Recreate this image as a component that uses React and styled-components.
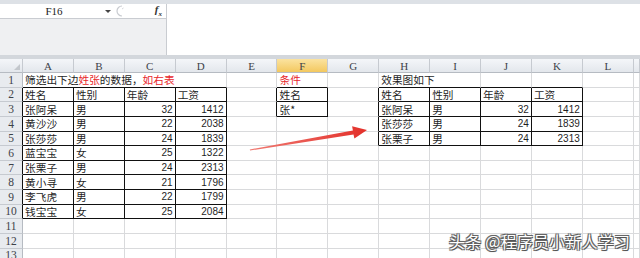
import React from "react";
import styled, { createGlobalStyle } from "styled-components";

const COLW = 50.9;
const ROWH = 14.64;
const GRID = "#d9dadc";
const INK = "#111";
const CJK = `"Noto Sans CJK SC", "Noto Sans", sans-serif`;

const GlobalStyle = createGlobalStyle`
  html, body { margin: 0; padding: 0; background: #fff; overflow: hidden; }
`;

const Window = styled.div`
  position: relative;
  width: 640px;
  height: 258px;
  overflow: hidden;
  font-family: ${CJK};
  background: #fff;
`;

const FormulaArea = styled.div`
  height: 59px;
  box-sizing: border-box;
  border-top: 4px solid #dde1e6;
  border-bottom: 4px solid #d3d7dc;
  display: grid;
  grid-template-columns: 167px 1fr;
`;

const LeftPanel = styled.div`
  display: flex;
  flex-direction: column;
  background: #eff0f2;
  border-right: 1px solid #c9ccd1;
`;

const NameRow = styled.div`
  height: 14px;
  display: flex;
  align-items: center;
  background: #fff;
  border-bottom: 1px solid #c9ccd1;
`;

const NameBox = styled.div`
  width: 100px;
  text-align: center;
  font-family: "Liberation Serif", serif;
  font-size: 11px;
  color: #222;
  padding-left: 4px;
`;

const DropArrow = styled.span`
  width: 0;
  height: 0;
  border-left: 3px solid transparent;
  border-right: 3px solid transparent;
  border-top: 3px solid #444;
  margin-left: 1px;
`;

const Buttons = styled.div`
  flex: 1;
  display: flex;
  align-items: center;
  justify-content: space-between;
  padding: 0 4px 0 5px;
`;

const Fx = styled.i`
  font-family: "Liberation Serif", serif;
  font-size: 11px;
  font-weight: bold;
  color: #333;
  & sub {
    font-size: 7px;
  }
`;

const FormulaInput = styled.div`
  background: #fff;
`;

const Sheet = styled.div`
  display: grid;
  grid-template-columns: 23px repeat(12, ${COLW}px) 1fr;
  grid-template-rows: 14px;
  grid-auto-rows: ${ROWH}px;
`;

const ColHead = styled.div`
  box-sizing: border-box;
  display: flex;
  align-items: center;
  justify-content: center;
  font-family: "Liberation Serif", serif;
  font-size: 11px;
  color: #3d4248;
  border-right: 1px solid #c6cad0;
  border-bottom: 1px solid #b6bbc2;
  background: ${(p) =>
    p.$active
      ? "linear-gradient(#fbe3a0, #f3c85f)"
      : "linear-gradient(#f4f6f9, #e3e7ec)"};
`;

const Corner = styled(ColHead)`
  position: relative;
  &::after {
    content: "";
    position: absolute;
    right: 2px;
    bottom: 2px;
    border-left: 6px solid transparent;
    border-bottom: 6px solid #c3c7cc;
  }
`;

const RowHead = styled.div`
  box-sizing: border-box;
  display: flex;
  align-items: center;
  justify-content: center;
  font-family: "Liberation Serif", serif;
  font-size: 11.5px;
  color: #3d4248;
  background: #e8ebef;
  border-bottom: 1px solid #c6cad0;
  border-right: 1px solid ${(p) => (p.$box ? INK : "#b6bbc2")};
`;

const Cell = styled.div`
  box-sizing: border-box;
  grid-column: span ${(p) => p.$span || 1};
  display: flex;
  align-items: center;
  justify-content: ${(p) => (p.$num ? "flex-end" : "flex-start")};
  padding: 0 2px 0 2px;
  white-space: nowrap;
  overflow: visible;
  font-family: ${(p) => (p.$num ? `"Liberation Sans", sans-serif` : CJK)};
  font-size: ${(p) => (p.$num ? "10px" : "10.7px")};
  color: ${(p) => (p.$red ? "#e8262b" : "#1f1f1f")};
  border-right: 1px solid ${(p) => p.$right};
  border-bottom: 1px solid ${(p) => p.$bottom};
`;

const Red = styled.span`
  color: #e8262b;
`;

const Overlay = styled.svg`
  position: absolute;
  left: 0;
  top: 0;
  pointer-events: none;
`;

const Watermark = styled.div`
  position: absolute;
  left: 449px;
  top: 229px;
  font-family: ${CJK};
  font-size: 16px;
  color: #fff;
  letter-spacing: 0.2px;
  text-shadow: 1px 1px 0 #555, -1px -1px 0 #666, 1px -1px 0 #666, -1px 1px 0 #666,
    0 0 2px #333;
`;

const COLS = ["A", "B", "C", "D", "E", "F", "G", "H", "I", "J", "K", "L"];

const boxes = [
  { r1: 2, r2: 10, c1: 0, c2: 3 },
  { r1: 2, r2: 3, c1: 5, c2: 5 },
  { r1: 2, r2: 5, c1: 7, c2: 10 },
];

const inBox = (r, c) =>
  boxes.some((b) => r >= b.r1 && r <= b.r2 && c >= b.c1 && c <= b.c2);

const people = [
  ["张阿呆", "男", 32, 1412],
  ["黄沙沙", "男", 22, 2038],
  ["张莎莎", "男", 24, 1839],
  ["蓝宝宝", "女", 25, 1322],
  ["张栗子", "男", 24, 2313],
  ["黄小寻", "女", 21, 1796],
  ["李飞虎", "男", 22, 1799],
  ["钱宝宝", "女", 25, 2084],
];
const result = people.filter((p) => p[0].startsWith("张"));
const header = ["姓名", "性别", "年龄", "工资"];

function buildRows() {
  const rows = {};
  for (let r = 1; r <= 13; r++) rows[r] = {};
  rows[1][0] = {
    span: 4,
    text: (
      <>
        筛选出下边<Red>姓张</Red>的数据，<Red>如右表</Red>
      </>
    ),
  };
  rows[1][5] = { text: "条件", red: true };
  rows[1][7] = { span: 2, text: "效果图如下" };
  header.forEach((h, i) => {
    rows[2][i] = { text: h };
    rows[2][7 + i] = { text: h };
  });
  rows[2][5] = { text: "姓名" };
  rows[3][5] = { text: "张*" };
  people.forEach((p, i) =>
    p.forEach((v, j) => (rows[3 + i][j] = { text: v, num: typeof v === "number" }))
  );
  result.forEach((p, i) =>
    p.forEach((v, j) => (rows[3 + i][7 + j] = { text: v, num: typeof v === "number" }))
  );
  return rows;
}

const rows = buildRows();

function SheetGrid() {
  const out = [];
  out.push(<Corner key="corner" />);
  COLS.forEach((c) =>
    out.push(
      <ColHead key={c} $active={c === "F"}>
        {c}
      </ColHead>
    )
  );
  out.push(<ColHead key="M" />);

  for (let r = 1; r <= 13; r++) {
    out.push(
      <RowHead key={`h${r}`} $box={inBox(r, 0)}>
        {r}
      </RowHead>
    );
    let c = 0;
    while (c <= 12) {
      const d = rows[r][c] || {};
      const span = d.span || 1;
      const last = c + span - 1;
      const right = inBox(r, last) || inBox(r, last + 1) ? INK : GRID;
      const bottom = inBox(r, c) || inBox(r + 1, c) ? INK : GRID;
      out.push(
        <Cell
          key={`${r}-${c}`}
          $span={span}
          $num={d.num}
          $red={d.red}
          $right={right}
          $bottom={bottom}
        >
          {d.text}
        </Cell>
      );
      c += span;
    }
  }
  return <Sheet>{out}</Sheet>;
}

function Arrow() {
  return (
    <Overlay width="640" height="258" viewBox="0 0 640 258">
      <defs>
        <linearGradient id="arrowFill" x1="250" y1="150" x2="367" y2="130" gradientUnits="userSpaceOnUse">
          <stop offset="0" stopColor="#f07a72" />
          <stop offset="1" stopColor="#e3302a" />
        </linearGradient>
      </defs>
      <polygon
        points="250,150.5 353.5,134.4 354.4,138.6 367,130 352.1,126.3 352.9,130.6 249.8,149.5"
        fill="url(#arrowFill)"
      />
    </Overlay>
  );
}

export default function App() {
  return (
    <>
      <GlobalStyle />
      <Window>
        <FormulaArea>
          <LeftPanel>
            <NameRow>
              <NameBox>F16</NameBox>
              <DropArrow />
              <Buttons>
                <svg width="10" height="12" viewBox="0 0 10 12">
                  <path d="M6 1 A5 5 0 0 0 6 11" fill="none" stroke="#c8cbd0" strokeWidth="1.2" />
                  <path d="M6 4 l1.5 -1" stroke="#d4d6da" strokeWidth="1" />
                </svg>
                <Fx>
                  f<sub>x</sub>
                </Fx>
              </Buttons>
            </NameRow>
          </LeftPanel>
          <FormulaInput />
        </FormulaArea>
        <SheetGrid />
        <Arrow />
        <Watermark>头条 @程序员小新人学习</Watermark>
      </Window>
    </>
  );
}
